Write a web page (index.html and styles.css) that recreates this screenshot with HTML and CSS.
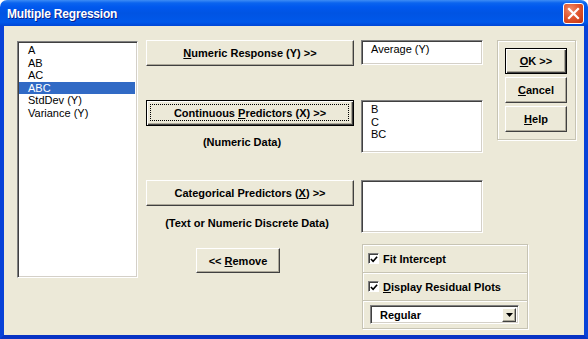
FILE: index.html
```html
<!DOCTYPE html>
<html lang="en">
<head>
  <meta charset="UTF-8">
  <title>Multiple Regression</title>
  <link rel="stylesheet" href="styles.css">
</head>
<body>

<div class="window">

  <div class="titlebar">
    <span class="title">Multiple Regression</span>
    <span class="close-btn">
      <svg width="13" height="13" viewBox="0 0 13 13">
        <path d="M2 2 L11 11 M11 2 L2 11" stroke="#fff" stroke-width="2.2" stroke-linecap="square"/>
      </svg>
    </span>
  </div>

  <div class="dialog-body">

    <div class="list-col">
      <ul class="listbox">
        <li>A</li>
        <li>AB</li>
        <li>AC</li>
        <li class="selected">ABC</li>
        <li>StdDev (Y)</li>
        <li>Variance (Y)</li>
      </ul>
    </div>

    <div class="mid-col">
      <button class="btn btn-wide"><u>N</u>umeric Response (Y) &gt;&gt;</button>
      <button class="btn btn-wide btn-default btn-continuous">Continuous <u>P</u>redictors (X) &gt;&gt;</button>
      <div class="hint hint-numeric">(Numeric Data)</div>
      <button class="btn btn-wide btn-categorical">Categorical Predictors (<u>X</u>) &gt;&gt;</button>
      <div class="hint hint-text">(Text or Numeric Discrete Data)</div>
      <button class="btn btn-remove">&lt;&lt; <u>R</u>emove</button>
    </div>

    <div class="box-col">
      <div class="textbox tb-single">Average (Y)</div>
      <div class="textbox tb-multi tb-predictors">B<br>C<br>BC</div>
      <div class="textbox tb-multi tb-categorical"></div>

      <div class="options">
        <div class="option-frame">
          <span class="checkbox">
            <svg width="9" height="9" viewBox="0 0 9 9">
              <polyline points="1,4 3.5,6.5 8,1.5" fill="none" stroke="#000" stroke-width="1.8"/>
            </svg>
          </span>
          <span class="option-label">Fit Intercept</span>
        </div>
        <div class="option-frame">
          <span class="checkbox">
            <svg width="9" height="9" viewBox="0 0 9 9">
              <polyline points="1,4 3.5,6.5 8,1.5" fill="none" stroke="#000" stroke-width="1.8"/>
            </svg>
          </span>
          <span class="option-label"><u>D</u>isplay Residual Plots</span>
        </div>
        <div class="option-frame frame-select">
          <div class="combo">
            <span class="combo-text">Regular</span>
            <span class="combo-btn">
              <svg width="7" height="4" viewBox="0 0 7 4"><path d="M0 0 H7 L3.5 4 Z" fill="#000"/></svg>
            </span>
          </div>
        </div>
      </div>
    </div>

    <div class="cmd-col">
      <div class="cmd-frame">
        <button class="btn btn-cmd btn-default"><u>O</u>K &gt;&gt;</button>
        <button class="btn btn-cmd"><u>C</u>ancel</button>
        <button class="btn btn-cmd"><u>H</u>elp</button>
      </div>
    </div>

  </div>

</div>

</body>
</html>
```

FILE: styles.css
```css
body {
  margin: 0;
  background: #ffffff;
  font-family: "Liberation Sans", Arial, sans-serif;
  font-size: 11px;
  color: #000;
}

.window {
  width: 588px;
  height: 339px;
  display: flex;
  flex-direction: column;
}

/* title bar */
.titlebar {
  height: 26px;
  flex: none;
  display: flex;
  align-items: center;
  justify-content: space-between;
  padding: 0 4px 0 7px;
  border-radius: 7px 7px 0 0;
  background: linear-gradient(to bottom, #3d8cf5 0, #0a64ef 3px, #0058ee 7px, #0054e3 50%, #0058ea 85%, #0047d6 100%);
  box-sizing: border-box;
}

.title {
  color: #fff;
  font-weight: bold;
  font-size: 12px;
  letter-spacing: -0.2px;
  text-shadow: 1px 1px 0 #0a1e8c;
  padding-top: 1px;
}

.close-btn {
  width: 21px;
  height: 21px;
  box-sizing: border-box;
  border: 1px solid #fff;
  border-radius: 3px;
  background: radial-gradient(circle at 35% 30%, #f08c6c 0, #e0572f 45%, #c4330f 100%);
  display: flex;
  align-items: center;
  justify-content: center;
  margin-top: 1px;
}

/* dialog body */
.dialog-body {
  flex: 1;
  display: flex;
  align-items: flex-start;
  background: #ece9d8;
  border-left: 4px solid #0842d8;
  border-right: 4px solid #0842d8;
  border-bottom: 4px solid #0733c4;
  padding: 14px 0 0 13px;
  box-sizing: border-box;
}

/* left list */
.list-col {
  width: 121px;
  margin-top: 1px;
}

.listbox {
  list-style: none;
  margin: 0;
  padding: 0;
  height: 237px;
  background: #fff;
  border: 1px solid;
  border-color: #808080 #fff #fff #808080;
  box-shadow: inset 1px 1px #404040, inset -1px -1px #d4d0c8;
  box-sizing: border-box;
  padding: 2px 2px 0 1px;
}

.listbox li {
  height: 12.5px;
  line-height: 12.5px;
  padding-left: 9px;
  white-space: nowrap;
}

.listbox .selected {
  background: #316ac5;
  color: #fff;
}

/* buttons */
.btn {
  display: block;
  position: relative;
  font-family: "Liberation Sans", Arial, sans-serif;
  font-size: 11px;
  font-weight: bold;
  color: #000;
  background: #ece9d8;
  border: 1px solid;
  border-color: #fff #404040 #404040 #fff;
  box-shadow: inset -1px -1px #aca899;
  padding: 0;
  margin: 0;
  box-sizing: border-box;
  cursor: pointer;
}

.btn-default {
  border: 1px solid #000;
  box-shadow: inset 1px 1px #fff, inset -1px -1px #404040, inset -2px -2px #aca899;
}

.btn-continuous::after {
  content: "";
  position: absolute;
  left: 3px;
  top: 3px;
  right: 4px;
  bottom: 4px;
  border: 1px dotted #000;
}

.mid-col {
  width: 208px;
  margin-left: 8px;
  display: flex;
  flex-direction: column;
}

.btn-wide {
  width: 208px;
  height: 26px;
}

.btn-continuous {
  margin-top: 34px;
}

.hint {
  font-weight: bold;
  height: 12px;
  line-height: 12px;
  text-align: center;
}

.hint-numeric {
  margin-top: 10px;
  padding-right: 16px;
}

.btn-categorical {
  margin-top: 32px;
}

.hint-text {
  margin-top: 11px;
  padding-right: 6px;
}

.btn-remove {
  width: 84px;
  height: 25px;
  margin-top: 19px;
  margin-left: 50px;
}

/* text boxes */
.box-col {
  width: 122px;
  margin-left: 7px;
  display: flex;
  flex-direction: column;
}

.textbox {
  width: 122px;
  background: #fff;
  border: 1px solid;
  border-color: #808080 #fff #fff #808080;
  box-shadow: inset 1px 1px #404040, inset -1px -1px #d4d0c8;
  box-sizing: border-box;
  padding: 2px 0 0 9px;
  line-height: 12.5px;
}

.tb-single {
  height: 25px;
}

.tb-multi {
  height: 53px;
}

.tb-predictors {
  margin-top: 35px;
}

.tb-categorical {
  margin-top: 27px;
}

/* option frames */
.options {
  width: 166px;
  margin-top: 11px;
  margin-left: 1px;
  display: flex;
  flex-direction: column;
}

.option-frame {
  height: 29px;
  box-sizing: border-box;
  border: 1px solid #c7c4b4;
  box-shadow: inset 1px 1px #fff, 1px 1px 0 #fff;
  display: flex;
  align-items: center;
  padding-left: 5px;
  margin-bottom: -1px;
  font-weight: bold;
}

.checkbox {
  width: 11px;
  height: 11px;
  box-sizing: border-box;
  background: #fff;
  border: 1px solid;
  border-color: #808080 #fff #fff #808080;
  box-shadow: inset 1px 1px #404040;
  display: flex;
  align-items: center;
  justify-content: center;
  margin-right: 4px;
}

.checkbox svg {
  margin: 1px 0 0 1px;
}

.frame-select {
  padding-left: 7px;
}

.combo {
  width: 149px;
  height: 19px;
  box-sizing: border-box;
  background: #fff;
  border: 1px solid;
  border-color: #808080 #fff #fff #808080;
  box-shadow: inset 1px 1px #404040, inset -1px -1px #d4d0c8;
  display: flex;
  align-items: center;
  justify-content: space-between;
  padding: 0 2px 0 9px;
}

.combo-btn {
  width: 14px;
  height: 14px;
  box-sizing: border-box;
  background: #ece9d8;
  border: 1px solid;
  border-color: #fff #404040 #404040 #fff;
  box-shadow: inset -1px -1px #aca899;
  display: flex;
  align-items: center;
  justify-content: center;
}

/* command buttons */
.cmd-col {
  width: 79px;
  margin-left: 14px;
}

.cmd-frame {
  height: 100px;
  box-sizing: border-box;
  border: 1px solid #c7c4b4;
  box-shadow: inset 1px 1px #fff, 1px 1px 0 #fff;
  padding: 7px 0 0 7px;
  display: flex;
  flex-direction: column;
  gap: 3px;
}

.btn-cmd {
  width: 62px;
  height: 26px;
}
```
